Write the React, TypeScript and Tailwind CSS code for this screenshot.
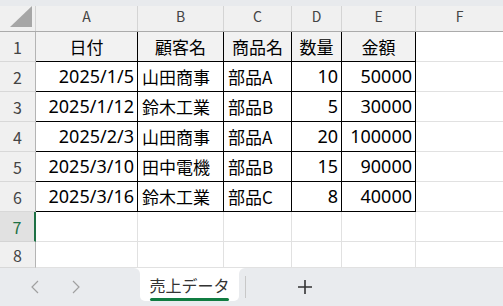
import React from 'react';

const font = { fontFamily: '"Noto Sans CJK JP", "Noto Sans", sans-serif' };
const latin = { fontFamily: '"Noto Sans", "Noto Sans CJK JP", sans-serif' };

type Cell = { text: string; align: 'left' | 'right' | 'center' };

const cols = [
  { key: 'A', w: 'w-[102px]' },
  { key: 'B', w: 'w-[86px]' },
  { key: 'C', w: 'w-[68px]' },
  { key: 'D', w: 'w-[50px]' },
  { key: 'E', w: 'w-[74px]' },
];

const header: Cell[] = ['日付', '顧客名', '商品名', '数量', '金額'].map((t) => ({ text: t, align: 'center' }));

const data: string[][] = [
  ['2025/1/5', '山田商事', '部品A', '10', '50000'],
  ['2025/1/12', '鈴木工業', '部品B', '5', '30000'],
  ['2025/2/3', '山田商事', '部品A', '20', '100000'],
  ['2025/3/10', '田中電機', '部品B', '15', '90000'],
  ['2025/3/16', '鈴木工業', '部品C', '8', '40000'],
];

const aligns: ('left' | 'right')[] = ['right', 'left', 'left', 'right', 'right'];

function RowHeader({ n, selected }: { n: number; selected?: boolean }) {
  return (
    <div
      className={
        selected
          ? 'w-[36px] shrink-0 flex items-center justify-center bg-[#e1e1e1] text-[#1e7145] border-r-2 border-r-[#1e7145] border-b border-b-[#d4d4d4] text-[16px]'
          : 'w-[36px] shrink-0 flex items-center justify-center bg-[#f0f0f0] text-[#444] border-r border-r-[#b4b4b4] border-b border-b-[#d8d8d8] text-[16px]'
      }
    >
      {n}
    </div>
  );
}

// Latin/numeric content renders a touch wider in the original sheet
const isLatin = (t: string) => /^[0-9/]+$/.test(t);

function TableRow({ n, cells, head }: { n: number; cells: Cell[]; head?: boolean }) {
  return (
    <div className="flex h-[30px]">
      <RowHeader n={n} />
      {cells.map((c, i) => (
        <div
          key={i}
          className={`${cols[i].w} shrink-0 flex items-center border-r border-b border-black text-black ${
            head ? 'bg-[#f2f2f2]' : 'bg-white'
          } ${isLatin(c.text) ? 'text-[18px]' : 'text-[17px]'} ${
            c.align === 'center' ? 'justify-center' : c.align === 'right' ? 'justify-end pr-[3px]' : 'justify-start pl-[4px]'
          }`}
          style={isLatin(c.text) ? latin : undefined}
        >
          {c.text}
        </div>
      ))}
      <div className="flex-1 border-b border-[#e1e1e1]" />
    </div>
  );
}

function EmptyRow({ n, selected, h }: { n: number; selected?: boolean; h: string }) {
  return (
    <div className={`flex ${h}`}>
      <RowHeader n={n} selected={selected} />
      {cols.map((c) => (
        <div key={c.key} className={`${c.w} shrink-0 border-r border-b border-[#e1e1e1]`} />
      ))}
      <div className="flex-1 border-b border-[#e1e1e1]" />
    </div>
  );
}

export default function App() {
  return (
    <div className="w-[503px] h-[306px] overflow-hidden bg-white flex flex-col" style={font}>
      {/* top strip */}
      <div className="h-[6px] bg-[#e8eaed] shrink-0" />
      {/* column headers */}
      <div className="flex h-[26px] shrink-0 bg-[#f0f0f0] border-b border-[#ababab]">
        <div className="w-[36px] shrink-0 relative border-r border-[#d4d4d4]">
          <svg width="36" height="25" className="absolute left-0 top-0">
            <polygon points="32,0 32,21 10,21" fill="#a6a6a6" />
          </svg>
        </div>
        {cols.map((c) => (
          <div
            key={c.key}
            className={`${c.w} shrink-0 flex justify-center text-[14px] leading-[20px] text-[#444] border-r border-[#d4d4d4]`}
          >
            {c.key}
          </div>
        ))}
        <div className="flex-1 flex justify-center text-[14px] leading-[20px] text-[#444]">F</div>
      </div>
      <TableRow n={1} cells={header} head />
      {data.map((r, i) => (
        <TableRow key={i} n={i + 2} cells={r.map((t, j) => ({ text: t, align: aligns[j] }))} />
      ))}
      <EmptyRow n={7} selected h="h-[30px]" />
      <EmptyRow n={8} h="h-[26px]" />
      {/* sheet tab bar */}
      <div className="flex h-[38px] shrink-0 bg-white">
        <div className="w-[140px] shrink-0 bg-[#e9ebee] rounded-tr-[6px] flex items-center">
          <svg width="10" height="14" className="ml-[30px]" viewBox="0 0 10 14">
            <polyline points="8,1 2,7 8,13" fill="none" stroke="#a0a0a0" strokeWidth="1.2" />
          </svg>
          <svg width="10" height="14" className="ml-[31px]" viewBox="0 0 10 14">
            <polyline points="2,1 8,7 2,13" fill="none" stroke="#a0a0a0" strokeWidth="1.2" />
          </svg>
        </div>
        <div className="w-[99px] shrink-0 bg-[#e9ebee] flex flex-col">
          <div className="h-[33px] bg-white rounded-b-[5px] flex flex-col items-center">
            <div className="mt-[7px] text-[16px] leading-[20px] text-[#333]">売上データ</div>
            <div className="mt-[3px] w-[79px] h-[3px] bg-[#107c41] rounded-full" />
          </div>
        </div>
        <div className="flex-1 bg-[#e9ebee] rounded-tl-[6px] flex items-center">
          <div className="ml-[6px] w-px h-[22px] bg-[#c8c8c8]" />
          <svg width="16" height="16" className="ml-[51px]" viewBox="0 0 16 16">
            <path d="M8 1V15M1 8H15" stroke="#333" strokeWidth="1.6" />
          </svg>
        </div>
      </div>
    </div>
  );
}
